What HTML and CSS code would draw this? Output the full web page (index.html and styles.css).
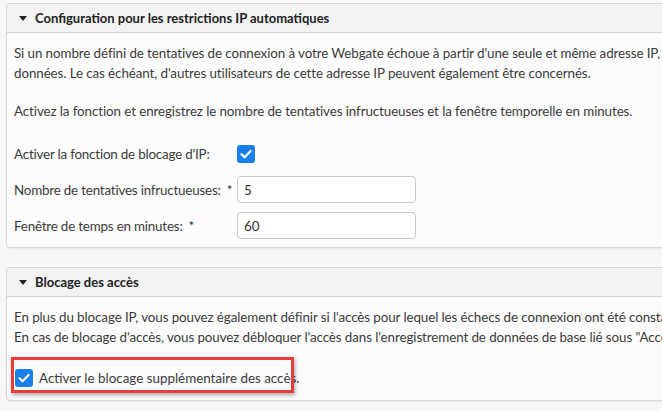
FILE: index.html
```html
<!DOCTYPE html>
<html lang="fr">
<head>
<meta charset="utf-8">
<link rel="stylesheet" href="styles.css">
</head>
<body>
<div class="page">
  <section class="panel">
    <header class="panel-head">
      <span class="caret"></span>
      <span class="panel-title">Configuration pour les restrictions IP automatiques</span>
    </header>
    <div class="panel-body">
      <p class="text">Si un nombre défini de tentatives de connexion à votre Webgate échoue à partir d'une seule et même adresse IP, l'adresse IP est bloquée pour l'accès à la banque de<br>données. Le cas échéant, d'autres utilisateurs de cette adresse IP peuvent également être concernés.</p>
      <p class="text gap">Activez la fonction et enregistrez le nombre de tentatives infructueuses et la fenêtre temporelle en minutes.</p>
      <div class="form">
        <div class="row">
          <label class="label">Activer la fonction de blocage d'IP:</label>
          <span class="check"><svg viewBox="0 0 18 18" width="18" height="18"><path d="M4.5 9.3 L7.6 12.2 L13.6 6" fill="none" stroke="#fff" stroke-width="2.2" stroke-linecap="round" stroke-linejoin="round"/></svg></span>
        </div>
        <div class="row">
          <label class="label">Nombre de tentatives infructueuses:<span class="req">*</span></label>
          <span class="input">5</span>
        </div>
        <div class="row">
          <label class="label">Fenêtre de temps en minutes:<span class="req">*</span></label>
          <span class="input">60</span>
        </div>
      </div>
    </div>
  </section>

  <section class="panel">
    <header class="panel-head">
      <span class="caret"></span>
      <span class="panel-title">Blocage des accès</span>
    </header>
    <div class="panel-body">
      <p class="text">En plus du blocage IP, vous pouvez également définir si l'accès pour lequel les échecs de connexion ont été constatés doit être bloqué.<br>En cas de blocage d'accès, vous pouvez débloquer l'accès dans l'enregistrement de données de base lié sous "Accès".</p>
      <div class="check-row">
        <span class="check"><svg viewBox="0 0 18 18" width="18" height="18"><path d="M4.5 9.3 L7.6 12.2 L13.6 6" fill="none" stroke="#fff" stroke-width="2.2" stroke-linecap="round" stroke-linejoin="round"/></svg></span>
        <span class="check-label">Activer le blocage supplémentaire des accès.</span>
        <span class="highlight"></span>
      </div>
    </div>
  </section>
</div>
</body>
</html>
```

FILE: styles.css
```css
html, body {
  margin: 0;
  padding: 0;
  background: #f7f7f7;
  overflow: hidden;
}
body {
  width: 662px;
  height: 411px;
  font-family: "Lato", "Open Sans", sans-serif;
  font-size: 13.4px;
  color: #3b3b3b;
}
.page {
  padding: 3px 0 0 6px;
  display: flex;
  flex-direction: column;
  gap: 19px;
  width: 760px;
}
.panel {
  border: 1px solid #d6d6d6;
  border-radius: 4px;
  background: #fcfcfc;
  box-shadow: 0 1px 2px rgba(0,0,0,0.06);
}
.panel-head {
  height: 28px;
  display: flex;
  align-items: center;
  gap: 8px;
  padding-left: 12px;
  background: #f2f2f2;
  border-bottom: 1px solid #d2d2d2;
  border-radius: 4px 4px 0 0;
}
.caret {
  width: 0;
  height: 0;
  border-left: 4px solid transparent;
  border-right: 4px solid transparent;
  border-top: 5px solid #222;
}
.panel-title {
  font-weight: 700;
  font-size: 13px;
  color: #222;
}
.panel-body {
  padding: 10px 0 8px 7px;
}
.text {
  margin: 0;
  line-height: 20px;
  white-space: nowrap;
  letter-spacing: -0.1px;
}
.text.gap {
  margin-top: 18px;
}
.form {
  margin-top: 19px;
  display: flex;
  flex-direction: column;
  gap: 9px;
}
.row {
  display: grid;
  grid-template-columns: 223px 179px;
  align-items: center;
  height: 27px;
}
.label {
  white-space: nowrap;
  letter-spacing: -0.2px;
}
.req {
  margin-left: 6px;
}
.check {
  width: 18px;
  height: 18px;
  border-radius: 3px;
  background: #1a7fe8;
  display: inline-flex;
}
.input {
  height: 27px;
  box-sizing: border-box;
  border: 1px solid #c9c9c9;
  border-radius: 4px;
  background: #fff;
  display: flex;
  align-items: center;
  padding-left: 6px;
  color: #333;
}
.check-row {
  position: relative;
  margin-top: 22px;
  margin-bottom: 5px;
  display: flex;
  align-items: center;
  gap: 6px;
  height: 18px;
  padding-left: 1px;
}
.check-label {
  white-space: nowrap;
}
.highlight {
  position: absolute;
  left: -3px;
  top: -12px;
  width: 283px;
  height: 36px;
  box-sizing: border-box;
  border: 3px solid #ea3c3c;
  box-shadow: 1px 2px 4px rgba(0,0,0,0.35);
}
```
